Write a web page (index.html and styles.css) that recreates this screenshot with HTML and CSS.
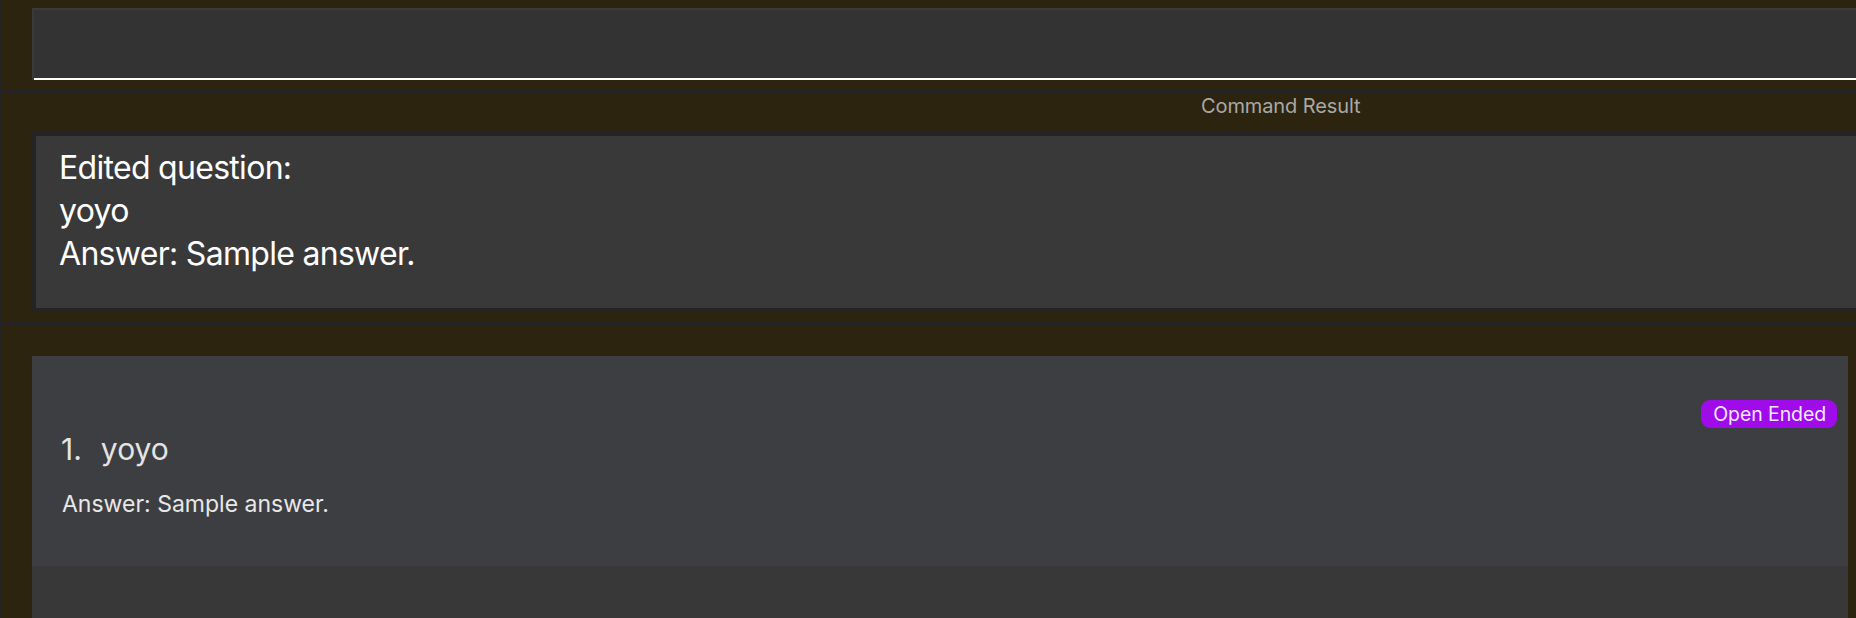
FILE: index.html
```html
<!DOCTYPE html>
<html>
<head>
<meta charset="utf-8">
<link rel="stylesheet" href="styles.css">
</head>
<body>
<div class="app">
  <section class="panel panel-command">
    <div class="command-box"><div class="command-input"></div></div>
  </section>
  <section class="panel panel-result">
    <div class="result-label">Command Result</div>
    <div class="result-box">
      <div class="result-text">Edited question:<br>yoyo<br>Answer: Sample answer.</div>
    </div>
  </section>
  <section class="panel panel-list">
    <div class="list-view">
      <div class="card">
        <div class="card-main">
          <div class="card-title"><span class="card-id">1.</span><span class="card-question">yoyo</span></div>
          <div class="card-answer">Answer: Sample answer.</div>
        </div>
        <div class="card-side">
          <span class="badge">Open Ended</span>
        </div>
      </div>
    </div>
  </section>
</div>
</body>
</html>
```
FILE: styles.css
```css
html, body {
  margin: 0;
  padding: 0;
}
body {
  background: #242424;
  width: 1856px;
  height: 618px;
  overflow: hidden;
  font-family: "Inter", "Noto Sans", sans-serif;
}
.app {
  display: flex;
  flex-direction: column;
  gap: 4px;
  padding-left: 2px;
  height: 618px;
}
.panel {
  background: #2d2410;
}
.panel-command {
  height: 90px;
  box-sizing: border-box;
  padding: 8px 0 10px 30px;
}
.command-box {
  height: 72px;
  box-sizing: border-box;
  background: #333333;
  border-left: 2px solid #3a3a3a;
  border-top: 2px solid #3a3a3a;
  display: flex;
}
.command-input {
  flex: 1;
  border-bottom: 2px solid #ffffff;
}
.panel-result {
  height: 228px;
  box-sizing: border-box;
  padding: 0 0 10px 30px;
  display: flex;
  flex-direction: column;
}
.result-label {
  height: 38px;
  box-sizing: border-box;
  padding: 0 0 0 1169px;
  font-size: 20px;
  line-height: 24px;
  color: #a9a9a6;
  letter-spacing: -0.1px;
}
.result-box {
  height: 180px;
  box-sizing: border-box;
  border: 4px solid #242424;
  border-right: none;
  background: #393939;
  padding: 10px 0 0 23px;
}
.result-text {
  font-size: 32px;
  line-height: 43px;
  letter-spacing: -0.7px;
  color: #ffffff;
}
.panel-list {
  flex: 1;
  padding: 30px 8px 0 30px;
  display: flex;
  flex-direction: column;
}
.list-view {
  flex: 1;
  background: #383838;
}
.card {
  height: 210px;
  box-sizing: border-box;
  background: #3d3e41;
  display: flex;
  justify-content: space-between;
  align-items: flex-start;
  padding: 0 11px 0 29px;
}
.card-main {
  padding-top: 75px;
  display: flex;
  flex-direction: column;
  gap: 23px;
}
.card-title {
  display: flex;
  gap: 19px;
  font-size: 30px;
  line-height: 36px;
  color: #e4e4e4;
}
.card-answer {
  font-size: 23px;
  line-height: 29px;
  color: #e8e8e8;
  padding-left: 1px;
}
.card-side {
  padding-top: 44px;
}
.badge {
  display: inline-flex;
  align-items: center;
  height: 28px;
  padding: 0 11px 0 12px;
  border-radius: 9px;
  background: #a00ce9;
  color: #f1e8ff;
  font-size: 19.5px;
  letter-spacing: -0.1px;
}
```
